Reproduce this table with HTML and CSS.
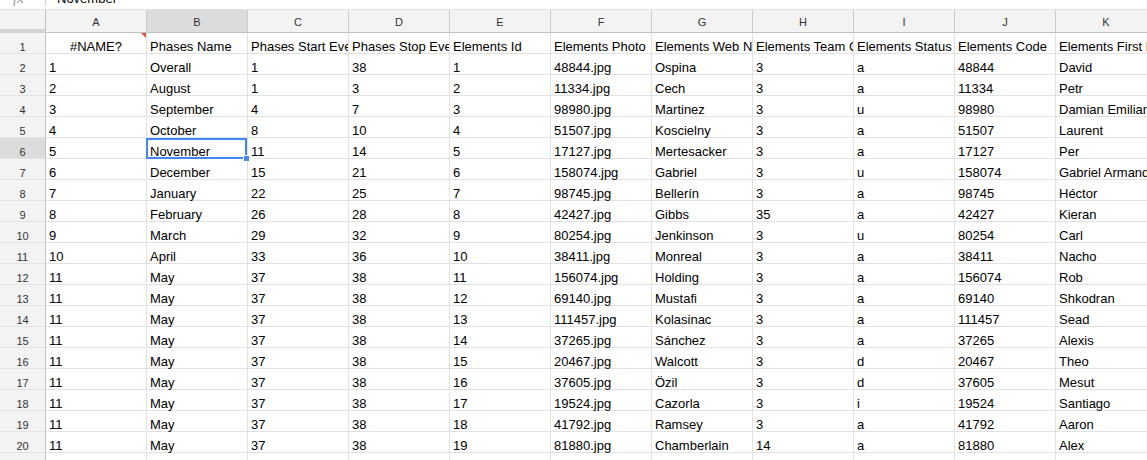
FILE: index.html
```html
<!DOCTYPE html>
<html>
<head>
<meta charset="utf-8">
<title>Sheet</title>
<link rel="stylesheet" href="styles.css">
</head>
<body>
<div class="formula-bar"><span class="fx">fx</span><span class="fsep"></span><span class="fval">November</span></div>
<div class="sheet">
  <div class="row head">
    <div class="corner"></div>
    <div class="colh">A</div><div class="colh selected">B</div><div class="colh">C</div><div class="colh">D</div><div class="colh">E</div><div class="colh">F</div><div class="colh">G</div><div class="colh">H</div><div class="colh">I</div><div class="colh">J</div><div class="colh">K</div>
  </div>
  <div class="row"><div class="rowh">1</div><div class="cell center note">#NAME?</div><div class="cell">Phases Name</div><div class="cell">Phases Start Event</div><div class="cell">Phases Stop Event</div><div class="cell">Elements Id</div><div class="cell">Elements Photo</div><div class="cell">Elements Web Name</div><div class="cell">Elements Team Code</div><div class="cell">Elements Status</div><div class="cell">Elements Code</div><div class="cell">Elements First Name</div></div>
  <div class="row"><div class="rowh">2</div><div class="cell">1</div><div class="cell">Overall</div><div class="cell">1</div><div class="cell">38</div><div class="cell">1</div><div class="cell">48844.jpg</div><div class="cell">Ospina</div><div class="cell">3</div><div class="cell">a</div><div class="cell">48844</div><div class="cell">David</div></div>
  <div class="row"><div class="rowh">3</div><div class="cell">2</div><div class="cell">August</div><div class="cell">1</div><div class="cell">3</div><div class="cell">2</div><div class="cell">11334.jpg</div><div class="cell">Cech</div><div class="cell">3</div><div class="cell">a</div><div class="cell">11334</div><div class="cell">Petr</div></div>
  <div class="row"><div class="rowh">4</div><div class="cell">3</div><div class="cell">September</div><div class="cell">4</div><div class="cell">7</div><div class="cell">3</div><div class="cell">98980.jpg</div><div class="cell">Martinez</div><div class="cell">3</div><div class="cell">u</div><div class="cell">98980</div><div class="cell">Damian Emiliano</div></div>
  <div class="row"><div class="rowh">5</div><div class="cell">4</div><div class="cell">October</div><div class="cell">8</div><div class="cell">10</div><div class="cell">4</div><div class="cell">51507.jpg</div><div class="cell">Koscielny</div><div class="cell">3</div><div class="cell">a</div><div class="cell">51507</div><div class="cell">Laurent</div></div>
  <div class="row"><div class="rowh selected">6</div><div class="cell">5</div><div class="cell active">November<span class="sel"><span class="handle"></span></span></div><div class="cell">11</div><div class="cell">14</div><div class="cell">5</div><div class="cell">17127.jpg</div><div class="cell">Mertesacker</div><div class="cell">3</div><div class="cell">a</div><div class="cell">17127</div><div class="cell">Per</div></div>
  <div class="row"><div class="rowh">7</div><div class="cell">6</div><div class="cell">December</div><div class="cell">15</div><div class="cell">21</div><div class="cell">6</div><div class="cell">158074.jpg</div><div class="cell">Gabriel</div><div class="cell">3</div><div class="cell">u</div><div class="cell">158074</div><div class="cell">Gabriel Armando</div></div>
  <div class="row"><div class="rowh">8</div><div class="cell">7</div><div class="cell">January</div><div class="cell">22</div><div class="cell">25</div><div class="cell">7</div><div class="cell">98745.jpg</div><div class="cell">Bellerín</div><div class="cell">3</div><div class="cell">a</div><div class="cell">98745</div><div class="cell">Héctor</div></div>
  <div class="row"><div class="rowh">9</div><div class="cell">8</div><div class="cell">February</div><div class="cell">26</div><div class="cell">28</div><div class="cell">8</div><div class="cell">42427.jpg</div><div class="cell">Gibbs</div><div class="cell">35</div><div class="cell">a</div><div class="cell">42427</div><div class="cell">Kieran</div></div>
  <div class="row"><div class="rowh">10</div><div class="cell">9</div><div class="cell">March</div><div class="cell">29</div><div class="cell">32</div><div class="cell">9</div><div class="cell">80254.jpg</div><div class="cell">Jenkinson</div><div class="cell">3</div><div class="cell">u</div><div class="cell">80254</div><div class="cell">Carl</div></div>
  <div class="row"><div class="rowh">11</div><div class="cell">10</div><div class="cell">April</div><div class="cell">33</div><div class="cell">36</div><div class="cell">10</div><div class="cell">38411.jpg</div><div class="cell">Monreal</div><div class="cell">3</div><div class="cell">a</div><div class="cell">38411</div><div class="cell">Nacho</div></div>
  <div class="row"><div class="rowh">12</div><div class="cell">11</div><div class="cell">May</div><div class="cell">37</div><div class="cell">38</div><div class="cell">11</div><div class="cell">156074.jpg</div><div class="cell">Holding</div><div class="cell">3</div><div class="cell">a</div><div class="cell">156074</div><div class="cell">Rob</div></div>
  <div class="row"><div class="rowh">13</div><div class="cell">11</div><div class="cell">May</div><div class="cell">37</div><div class="cell">38</div><div class="cell">12</div><div class="cell">69140.jpg</div><div class="cell">Mustafi</div><div class="cell">3</div><div class="cell">a</div><div class="cell">69140</div><div class="cell">Shkodran</div></div>
  <div class="row"><div class="rowh">14</div><div class="cell">11</div><div class="cell">May</div><div class="cell">37</div><div class="cell">38</div><div class="cell">13</div><div class="cell">111457.jpg</div><div class="cell">Kolasinac</div><div class="cell">3</div><div class="cell">a</div><div class="cell">111457</div><div class="cell">Sead</div></div>
  <div class="row"><div class="rowh">15</div><div class="cell">11</div><div class="cell">May</div><div class="cell">37</div><div class="cell">38</div><div class="cell">14</div><div class="cell">37265.jpg</div><div class="cell">Sánchez</div><div class="cell">3</div><div class="cell">a</div><div class="cell">37265</div><div class="cell">Alexis</div></div>
  <div class="row"><div class="rowh">16</div><div class="cell">11</div><div class="cell">May</div><div class="cell">37</div><div class="cell">38</div><div class="cell">15</div><div class="cell">20467.jpg</div><div class="cell">Walcott</div><div class="cell">3</div><div class="cell">d</div><div class="cell">20467</div><div class="cell">Theo</div></div>
  <div class="row"><div class="rowh">17</div><div class="cell">11</div><div class="cell">May</div><div class="cell">37</div><div class="cell">38</div><div class="cell">16</div><div class="cell">37605.jpg</div><div class="cell">Özil</div><div class="cell">3</div><div class="cell">d</div><div class="cell">37605</div><div class="cell">Mesut</div></div>
  <div class="row"><div class="rowh">18</div><div class="cell">11</div><div class="cell">May</div><div class="cell">37</div><div class="cell">38</div><div class="cell">17</div><div class="cell">19524.jpg</div><div class="cell">Cazorla</div><div class="cell">3</div><div class="cell">i</div><div class="cell">19524</div><div class="cell">Santiago</div></div>
  <div class="row"><div class="rowh">19</div><div class="cell">11</div><div class="cell">May</div><div class="cell">37</div><div class="cell">38</div><div class="cell">18</div><div class="cell">41792.jpg</div><div class="cell">Ramsey</div><div class="cell">3</div><div class="cell">a</div><div class="cell">41792</div><div class="cell">Aaron</div></div>
  <div class="row"><div class="rowh">20</div><div class="cell">11</div><div class="cell">May</div><div class="cell">37</div><div class="cell">38</div><div class="cell">19</div><div class="cell">81880.jpg</div><div class="cell">Chamberlain</div><div class="cell">14</div><div class="cell">a</div><div class="cell">81880</div><div class="cell">Alex</div></div>
  <div class="row"><div class="rowh">21</div><div class="cell"></div><div class="cell"></div><div class="cell"></div><div class="cell"></div><div class="cell"></div><div class="cell"></div><div class="cell"></div><div class="cell"></div><div class="cell"></div><div class="cell"></div><div class="cell"></div></div>
</div>
</body>
</html>
```

FILE: styles.css
```css
html, body {
  margin: 0;
  padding: 0;
  background: #fff;
}
body {
  width: 1147px;
  height: 460px;
  overflow: hidden;
  font-family: "Liberation Sans", Arial, sans-serif;
  color: #000;
}
.formula-bar {
  height: 9px;
  border-bottom: 1px solid #e2e2e2;
  overflow: hidden;
  display: flex;
  align-items: flex-start;
}
.fx {
  width: 45px;
  flex: none;
  padding-left: 13px;
  box-sizing: border-box;
  margin-top: -9px;
  line-height: 15px;
  font-family: "Liberation Serif", serif;
  font-style: italic;
  font-size: 15px;
  color: #999;
}
.fsep {
  width: 1px;
  height: 6px;
  flex: none;
  background: #d0d0d0;
}
.fval {
  margin-left: 11px;
  margin-top: -9px;
  line-height: 15px;
  font-size: 13px;
}
.sheet {
  width: 1157px;
}
.row {
  display: flex;
  height: 21px;
}
.row.head {
  height: 23px;
}
.corner {
  width: 46px;
  flex: none;
  box-sizing: border-box;
  background: #f3f3f3;
  border-right: 1px solid #c0c0c0;
  border-bottom: 4px solid #d4d4d4;
}
.colh {
  width: 101px;
  flex: none;
  box-sizing: border-box;
  background: #f3f3f3;
  border-right: 1px solid #cccccc;
  border-bottom: 1px solid #c0c0c0;
  display: flex;
  align-items: center;
  justify-content: center;
  padding-top: 2px;
  font-size: 11px;
  line-height: 13px;
  color: #333;
}
.colh.selected,
.rowh.selected {
  background: #dcdcdc;
}
.rowh {
  width: 46px;
  flex: none;
  box-sizing: border-box;
  background: #f3f3f3;
  border-right: 1px solid #c0c0c0;
  border-bottom: 1px solid #e2e2e2;
  display: flex;
  align-items: flex-end;
  justify-content: center;
  font-size: 11px;
  line-height: 11px;
  color: #333;
}
.cell {
  width: 101px;
  flex: none;
  box-sizing: border-box;
  border-right: 1px solid #e2e2e2;
  border-bottom: 1px solid #e2e2e2;
  padding: 0 3px;
  display: flex;
  align-items: flex-end;
  font-size: 13px;
  line-height: 13px;
  white-space: nowrap;
  overflow-x: clip;
  overflow-y: visible;
}
.cell.center {
  justify-content: center;
}
.cell.note {
  position: relative;
}
.cell.note::after {
  content: "";
  position: absolute;
  top: 0;
  right: 0;
  width: 0;
  height: 0;
  border-left: 5px solid transparent;
  border-top: 5px solid #e0523c;
}
.cell.active {
  position: relative;
  overflow: visible;
}
.sel {
  position: absolute;
  top: 0;
  left: -1px;
  right: 0;
  bottom: -1px;
  border: 2px solid #4285f4;
  pointer-events: none;
}
.handle {
  position: absolute;
  right: -5px;
  bottom: -5px;
  width: 5px;
  height: 5px;
  background: #4285f4;
  border: 1px solid #fff;
}
```
